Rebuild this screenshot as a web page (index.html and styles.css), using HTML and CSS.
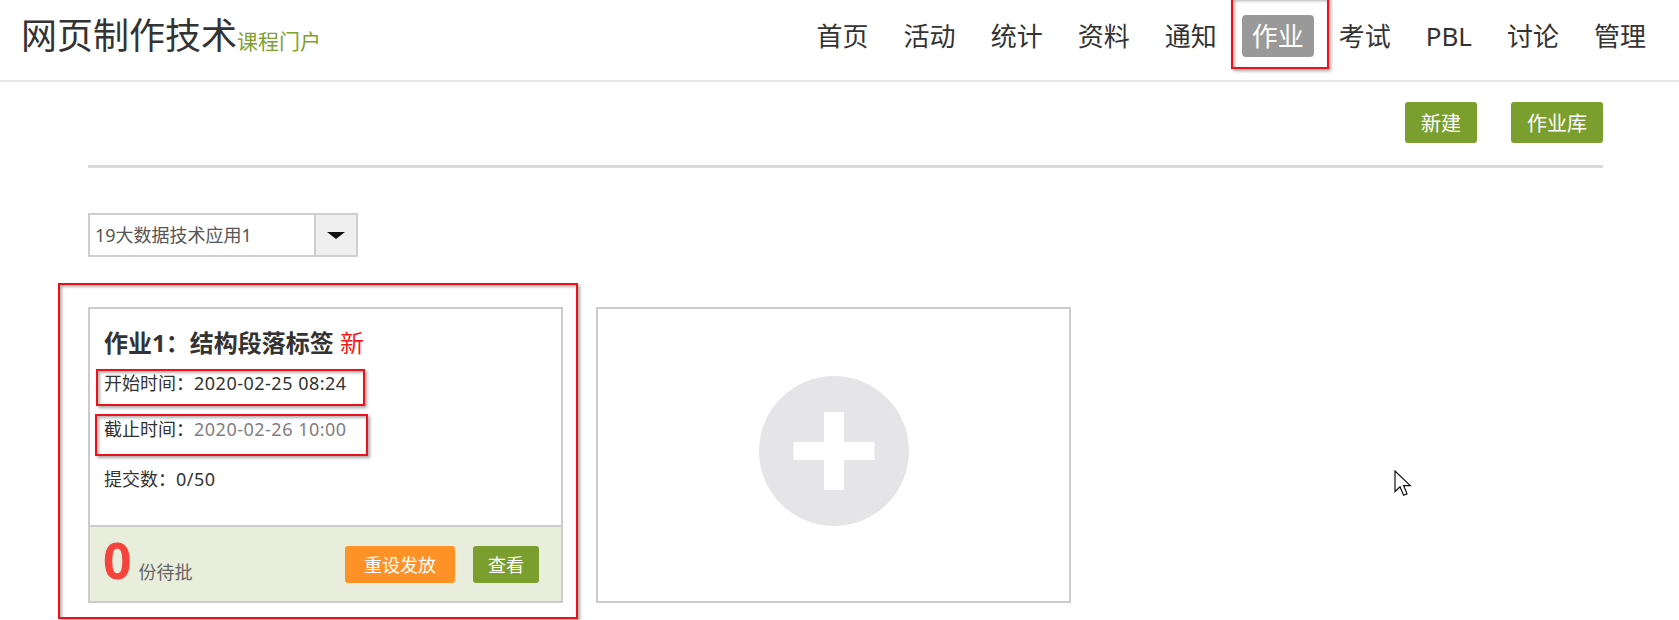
FILE: index.html
```html
<!DOCTYPE html>
<html lang="zh-CN">
<head>
<meta charset="utf-8">
<title>作业 - 网页制作技术课程门户</title>
<link rel="stylesheet" href="styles.css">
</head>
<body>
<header class="topbar">
  <div class="brand"><span class="brand-title">网页制作技术</span><span class="brand-sub">课程门户</span></div>
  <nav class="nav">
    <a class="nav-item">首页</a>
    <a class="nav-item">活动</a>
    <a class="nav-item">统计</a>
    <a class="nav-item">资料</a>
    <a class="nav-item">通知</a>
    <a class="nav-item active">作业<span class="mark mark-nav"></span></a>
    <a class="nav-item">考试</a>
    <a class="nav-item">PBL</a>
    <a class="nav-item">讨论</a>
    <a class="nav-item">管理</a>
  </nav>
</header>
<main class="content">
  <div class="toolbar">
    <button class="btn btn-green btn-lg">新建</button>
    <button class="btn btn-green btn-lg">作业库</button>
  </div>
  <div class="divider"></div>
  <div class="select">
    <span class="select-text">19大数据技术应用1</span>
    <span class="select-arrow"><span class="caret"></span></span>
  </div>
  <div class="cards">
    <div class="card">
      <span class="mark mark-card"></span>
      <div class="card-body">
        <h3 class="card-title">作业1：结构段落标签 <span class="tag-new">新</span></h3>
        <div class="card-row"><span class="label">开始时间：</span><span class="val">2020-02-25 08:24</span></div>
        <div class="card-row"><span class="label">截止时间：</span><span class="val val-muted">2020-02-26 10:00</span></div>
        <div class="card-row row-count"><span class="label">提交数：</span><span class="val">0/50</span></div>
        <span class="mark mark-start"></span>
        <span class="mark mark-end"></span>
      </div>
      <div class="card-footer">
        <div class="footer-left"><span class="pending-num">0</span><span class="pending-text">份待批</span></div>
        <div class="footer-actions">
          <button class="btn btn-md btn-orange">重设发放</button>
          <button class="btn btn-md btn-green btn-view">查看</button>
        </div>
      </div>
    </div>
    <div class="card card-add">
      <div class="add-circle"></div>
    </div>
  </div>
</main>
<svg class="cursor" width="20" height="28" viewBox="0 0 20 28">
  <path d="M1 1 L1 21.5 L6 16.8 L9.6 25.2 L13 23.8 L9.6 15.6 L16.3 15.6 Z" fill="#fff" stroke="#111" stroke-width="1.2" stroke-linejoin="miter"/>
</svg>
</body>
</html>
```
FILE: styles.css
```css
* { box-sizing: border-box; }
html, body { margin: 0; padding: 0; }
body {
  width: 1679px;
  height: 620px;
  overflow: hidden;
  position: relative;
  background: #fff;
  color: #333;
  font-family: "Noto Sans", "Noto Sans CJK SC", sans-serif;
}

.topbar {
  height: 82px;
  border-bottom: 2px solid #e6e6e6;
  display: flex;
  justify-content: space-between;
  align-items: center;
  padding: 0 23px 8px 21px;
}
.brand { display: flex; align-items: baseline; }
.brand-title { font-size: 36px; line-height: 1; color: #333; }
.brand-sub { font-size: 21px; line-height: 1; color: #7ea12f; }

.nav { display: flex; align-items: center; gap: 15px; }
.nav-item {
  position: relative;
  font-size: 26px;
  line-height: 42px;
  padding: 0 10px;
  border-radius: 4px;
  color: #333;
  text-decoration: none;
}
.nav-item.active { background: #999; color: #fff; }

.mark {
  position: absolute;
  border: 2px solid #e8141b;
  box-shadow: 2px 2px 3px rgba(0,0,0,0.35), inset 2px 2px 3px rgba(0,0,0,0.3);
  pointer-events: none;
}
.mark-nav { left: -11px; right: -15px; top: -18px; bottom: -12px; }

.content { padding: 20px 76px 0 88px; }
.toolbar { display: flex; justify-content: flex-end; gap: 34px; }
.btn {
  border: 0;
  color: #fff;
  font-family: inherit;
  border-radius: 3px;
  padding: 0 16px;
  cursor: pointer;
}
.btn-lg { height: 41px; font-size: 20px; }
.btn-md { height: 37px; font-size: 18px; }
.btn-green { background: #7b9f2f; }
.btn-orange { background: #ff9226; padding: 0 19px; }
.btn-view { padding: 0 15px; }

.divider { height: 3px; background: #dadada; margin-top: 22px; }

.select {
  margin-top: 45px;
  width: 270px;
  height: 44px;
  border: 2px solid #cfcfcf;
  display: flex;
}
.select-text {
  flex: 1;
  padding-left: 5px;
  font-size: 18px;
  line-height: 40px;
  color: #555;
}
.select-arrow {
  width: 42px;
  background: #efefef;
  border-left: 2px solid #cfcfcf;
  display: flex;
  align-items: center;
  justify-content: center;
}
.caret {
  width: 0; height: 0;
  border-left: 9px solid transparent;
  border-right: 9px solid transparent;
  border-top: 7px solid #111;
}

.cards { margin-top: 50px; display: flex; gap: 33px; }
.card {
  position: relative;
  width: 475px;
  height: 296px;
  border: 2px solid #cccccc;
  display: flex;
  flex-direction: column;
  background: #fff;
}
.mark-card { left: -32px; right: -17px; top: -26px; bottom: -18px; }
.card-body { flex: 1; position: relative; padding: 17px 14px 0; }
.card-title { margin: 0; font-size: 24px; line-height: 34px; font-weight: bold; color: #333; }
.tag-new { color: #f31a1a; font-weight: normal; }
.card-row { font-size: 18px; line-height: 46px; color: #333; }
.val { letter-spacing: 0.5px; }
.val-muted { color: #808080; }
.row-count { margin-top: 4px; }
.mark-start { left: 6px; top: 60px; width: 269px; height: 37px; }
.mark-end { left: 5px; top: 105px; width: 273px; height: 42px; }

.card-footer {
  height: 76px;
  border-top: 2px solid #cccccc;
  background: #e9eddb;
  display: flex;
  align-items: center;
  justify-content: space-between;
  padding: 0 22px 0 13px;
}
.footer-left { display: flex; align-items: baseline; margin-bottom: 8px; }
.pending-num { font-size: 50px; line-height: 1; font-weight: bold; color: #f5443b; }
.pending-text { font-size: 18px; color: #666; margin-left: 7px; }
.footer-actions { display: flex; gap: 18px; }

.card-add { align-items: center; justify-content: center; }
.add-circle {
  position: relative;
  width: 150px;
  height: 150px;
  border-radius: 50%;
  background: #e5e5e7;
  margin-bottom: 8px;
}
.add-circle::before,
.add-circle::after {
  content: "";
  position: absolute;
  left: 50%;
  top: 50%;
  background: #fff;
  transform: translate(-50%, -50%);
}
.add-circle::before { width: 20px; height: 78px; }
.add-circle::after { width: 81px; height: 18px; }

.cursor { position: absolute; left: 1394px; top: 470px; }
```
